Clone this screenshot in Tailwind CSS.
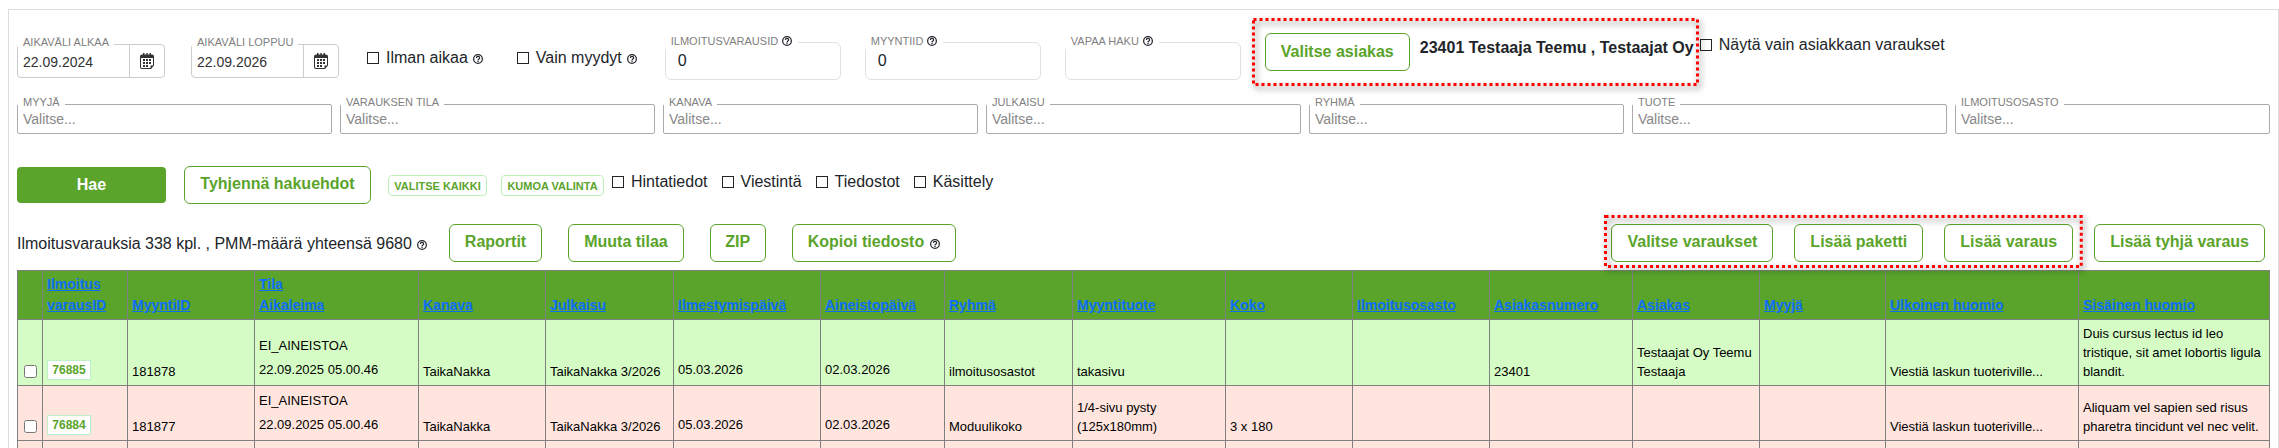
<!DOCTYPE html>
<html lang="fi">
<head>
<meta charset="utf-8">
<title>Ilmoitusvaraukset</title>
<script src="https://cdn.jsdelivr.net/npm/@tailwindcss/browser@4"></script>
</head>
<body class="h-screen bg-white pt-[9px] pl-2 font-['Liberation_Sans',Arial,sans-serif] text-base leading-6 text-[#212529] overflow-hidden">

<svg class="hidden" aria-hidden="true">
  <symbol id="help" viewBox="0 0 20 20">
    <circle cx="10" cy="10" r="8.7" fill="none" stroke="currentColor" stroke-width="2.5"/>
    <path d="M6.8 8.2C6.8 6 8.2 4.8 10.1 4.8S13.3 6 13.3 7.8C13.3 10 10.1 10 10.1 12.4" fill="none" stroke="currentColor" stroke-width="2.4"/>
    <rect x="8.8" y="13.4" width="2.5" height="2.5" fill="currentColor"/>
  </symbol>
  <symbol id="calendar" viewBox="0 0 14 16">
    <path fill="currentColor" fill-rule="evenodd" d="M2 1.5H3V0H4.5V1.5H6.3V0H7.7V1.5H9.5V0H11V1.5H12Q14 1.5 14 3.5V12.5L11 16H2Q0 16 0 14V3.5Q0 1.5 2 1.5ZM1 5V14Q1 15 2 15H10.5V12.5H13V5Z"/>
    <path fill="currentColor" d="M3 6h2v2H3zM6 6h2v2H6zM9 6h2v2H9zM3 9h2v2H3zM6 9h2v2H6zM9 9h2v2H9zM3 12h2v2H3zM6 12h2v2H6z"/>
  </symbol>
</svg>

<main class="h-full overflow-hidden border border-b-0 border-[#dddddd] px-2 pt-2">

  <form>
    <div class="flex items-start">
      <div class="relative mt-[26px] flex h-[34px] w-[148px] rounded border border-[#cccccc]">
        <label for="alkaa" class="absolute -top-[9px] left-0 bg-white px-[5px] text-[11px] leading-3 text-[#808080] whitespace-nowrap">AIKAVÄLI ALKAA</label>
        <input id="alkaa" value="22.09.2024" class="min-w-0 flex-1 pt-0.5 pl-[5px] text-sm text-[#333333]">
        <button type="button" aria-label="Avaa kalenteri" class="flex w-[35px] items-center justify-center border-l border-[#cccccc] text-[#333333]"><svg class="h-4 w-3.5"><use href="#calendar"/></svg></button>
      </div>
      <div class="relative mt-[26px] ml-[26px] flex h-[34px] w-[148px] rounded border border-[#cccccc]">
        <label for="loppuu" class="absolute -top-[9px] left-0 bg-white px-[5px] text-[11px] leading-3 text-[#808080] whitespace-nowrap">AIKAVÄLI LOPPUU</label>
        <input id="loppuu" value="22.09.2026" class="min-w-0 flex-1 pt-0.5 pl-[5px] text-sm text-[#333333]">
        <button type="button" aria-label="Avaa kalenteri" class="flex w-[35px] items-center justify-center border-l border-[#cccccc] text-[#333333]"><svg class="h-4 w-3.5"><use href="#calendar"/></svg></button>
      </div>

      <div class="mt-7 ml-7 flex items-center">
        <input id="ilman" type="checkbox" class="size-3 appearance-none border border-[#212529] checked:bg-[#212529]">
        <label for="ilman" class="ml-[7px]">Ilman aikaa</label>
        <svg class="mt-0.5 ml-[5px] size-2.5"><use href="#help"/></svg>
      </div>
      <div class="mt-7 ml-[34px] flex items-center">
        <input id="myydyt" type="checkbox" class="size-3 appearance-none border border-[#212529] checked:bg-[#212529]">
        <label for="myydyt" class="ml-[7px]">Vain myydyt</label>
        <svg class="mt-0.5 ml-[5px] size-2.5"><use href="#help"/></svg>
      </div>

      <div class="relative mt-6 ml-7 w-44">
        <label for="varausid" class="absolute -top-[9px] left-0 flex items-center bg-white px-1.5 text-[11px] leading-4 text-[#808080] whitespace-nowrap">ILMOITUSVARAUSID<svg class="ml-1 size-2.5 text-[#212529]"><use href="#help"/></svg></label>
        <input id="varausid" value="0" class="block h-[38px] w-full rounded-md border border-[#dee2e6] pl-3">
      </div>
      <div class="relative mt-6 ml-6 w-44">
        <label for="myyntiid" class="absolute -top-[9px] left-0 flex items-center bg-white px-1.5 text-[11px] leading-4 text-[#808080] whitespace-nowrap">MYYNTIID<svg class="ml-1 size-2.5 text-[#212529]"><use href="#help"/></svg></label>
        <input id="myyntiid" value="0" class="block h-[38px] w-full rounded-md border border-[#dee2e6] pl-3">
      </div>
      <div class="relative mt-6 ml-6 w-44">
        <label for="haku" class="absolute -top-[9px] left-0 flex items-center bg-white px-1.5 text-[11px] leading-4 text-[#808080] whitespace-nowrap">VAPAA HAKU<svg class="ml-1 size-2.5 text-[#212529]"><use href="#help"/></svg></label>
        <input id="haku" class="block h-[38px] w-full rounded-md border border-[#dee2e6] pl-3">
      </div>

      <div class="relative ml-[11px] flex h-[68px] w-[447px] items-start pl-[13px]">
        <button type="button" class="mt-[15px] h-[38px] w-[145px] rounded-md border border-[#5aa42b] font-bold text-[#5aa42b]">Valitse asiakas</button>
        <strong class="mt-[18px] ml-2.5 whitespace-nowrap">23401 Testaaja Teemu , Testaajat Oy</strong>
        <svg class="pointer-events-none absolute inset-0 size-full overflow-visible drop-shadow-[2px_3px_3px_rgba(0,0,0,0.6)]"><rect x="1.5" y="1.5" class="h-[calc(100%-3px)] w-[calc(100%-3px)]" fill="none" stroke="#ff0000" stroke-width="3" stroke-dasharray="3 3"/></svg>
      </div>

      <div class="mt-[15px] ml-px flex items-center">
        <input id="vain" type="checkbox" class="size-3 appearance-none border border-[#212529] checked:bg-[#212529]">
        <label for="vain" class="ml-[7px]">Näytä vain asiakkaan varaukset</label>
      </div>
    </div>

    <div class="mt-[18px] grid grid-cols-7 gap-2">
      <div class="relative">
        <label for="s1" class="absolute -top-2 left-px bg-white px-[5px] text-[11px] leading-3 text-[#808080]">MYYJÄ</label>
        <select id="s1" class="block h-[30px] w-full appearance-none rounded-xs border border-[#aaaaaa] pb-px pl-[5px] text-sm text-[#888888]"><option>Valitse...</option></select>
      </div>
      <div class="relative">
        <label for="s2" class="absolute -top-2 left-px bg-white px-[5px] text-[11px] leading-3 text-[#808080]">VARAUKSEN TILA</label>
        <select id="s2" class="block h-[30px] w-full appearance-none rounded-xs border border-[#aaaaaa] pb-px pl-[5px] text-sm text-[#888888]"><option>Valitse...</option></select>
      </div>
      <div class="relative">
        <label for="s3" class="absolute -top-2 left-px bg-white px-[5px] text-[11px] leading-3 text-[#808080]">KANAVA</label>
        <select id="s3" class="block h-[30px] w-full appearance-none rounded-xs border border-[#aaaaaa] pb-px pl-[5px] text-sm text-[#888888]"><option>Valitse...</option></select>
      </div>
      <div class="relative">
        <label for="s4" class="absolute -top-2 left-px bg-white px-[5px] text-[11px] leading-3 text-[#808080]">JULKAISU</label>
        <select id="s4" class="block h-[30px] w-full appearance-none rounded-xs border border-[#aaaaaa] pb-px pl-[5px] text-sm text-[#888888]"><option>Valitse...</option></select>
      </div>
      <div class="relative">
        <label for="s5" class="absolute -top-2 left-px bg-white px-[5px] text-[11px] leading-3 text-[#808080]">RYHMÄ</label>
        <select id="s5" class="block h-[30px] w-full appearance-none rounded-xs border border-[#aaaaaa] pb-px pl-[5px] text-sm text-[#888888]"><option>Valitse...</option></select>
      </div>
      <div class="relative">
        <label for="s6" class="absolute -top-2 left-px bg-white px-[5px] text-[11px] leading-3 text-[#808080]">TUOTE</label>
        <select id="s6" class="block h-[30px] w-full appearance-none rounded-xs border border-[#aaaaaa] pb-px pl-[5px] text-sm text-[#888888]"><option>Valitse...</option></select>
      </div>
      <div class="relative">
        <label for="s7" class="absolute -top-2 left-px bg-white px-[5px] text-[11px] leading-3 text-[#808080]">ILMOITUSOSASTO</label>
        <select id="s7" class="block h-[30px] w-full appearance-none rounded-xs border border-[#aaaaaa] pb-px pl-[5px] text-sm text-[#888888]"><option>Valitse...</option></select>
      </div>
    </div>

    <div class="mt-8 flex items-start">
      <button type="submit" class="mt-px h-9 w-[149px] rounded bg-[#5aa42b] font-bold text-white">Hae</button>
      <button type="reset" class="ml-[18px] h-[38px] w-[187px] rounded-md border border-[#5aa42b] pb-0.5 font-bold text-[#5aa42b]">Tyhjennä hakuehdot</button>
      <button type="button" class="mt-[9px] ml-[17px] h-[21px] w-[99px] rounded border border-[#bdf0b8] text-[11px] leading-4 font-bold whitespace-nowrap text-[#5aa42b]">VALITSE KAIKKI</button>
      <button type="button" class="mt-[9px] ml-3.5 h-[21px] w-[103px] rounded border border-[#bdf0b8] text-[11px] leading-4 font-bold whitespace-nowrap text-[#5aa42b]">KUMOA VALINTA</button>
      <div class="mt-1 ml-2 flex gap-3.5">
        <div class="flex items-center gap-[7px]"><input id="c1" type="checkbox" class="size-3 appearance-none border border-[#212529] checked:bg-[#212529]"><label for="c1">Hintatiedot</label></div>
        <div class="flex items-center gap-[7px]"><input id="c2" type="checkbox" class="size-3 appearance-none border border-[#212529] checked:bg-[#212529]"><label for="c2">Viestintä</label></div>
        <div class="flex items-center gap-[7px]"><input id="c3" type="checkbox" class="size-3 appearance-none border border-[#212529] checked:bg-[#212529]"><label for="c3">Tiedostot</label></div>
        <div class="flex items-center gap-[7px]"><input id="c4" type="checkbox" class="size-3 appearance-none border border-[#212529] checked:bg-[#212529]"><label for="c4">Käsittely</label></div>
      </div>
    </div>
  </form>

  <div class="mt-5 flex items-start pr-[5px]">
    <p class="mt-2 flex items-center whitespace-nowrap">Ilmoitusvarauksia 338 kpl. , PMM-määrä yhteensä 9680<svg class="mt-0.5 ml-[5px] size-2.5"><use href="#help"/></svg></p>
    <div class="ml-[22px] flex gap-[26px]">
      <button type="button" class="h-[38px] rounded-md border border-[#5aa42b] px-[15px] pb-0.5 font-bold text-[#5aa42b]">Raportit</button>
      <button type="button" class="h-[38px] rounded-md border border-[#5aa42b] px-[15px] pb-0.5 font-bold text-[#5aa42b]">Muuta tilaa</button>
      <button type="button" class="h-[38px] w-14 rounded-md border border-[#5aa42b] pb-0.5 font-bold text-[#5aa42b]">ZIP</button>
      <button type="button" class="flex h-[38px] items-center rounded-md border border-[#5aa42b] px-[15px] pb-0.5 font-bold text-[#5aa42b]">Kopioi tiedosto<svg class="mt-1 ml-1.5 size-2.5 text-[#212529]"><use href="#help"/></svg></button>
    </div>
    <div class="relative ml-auto flex gap-[21px]">
      <button type="button" class="h-[38px] rounded-md border border-[#5aa42b] px-[15px] pb-0.5 font-bold text-[#5aa42b]">Valitse varaukset</button>
      <button type="button" class="h-[38px] rounded-md border border-[#5aa42b] px-[15px] pb-0.5 font-bold text-[#5aa42b]">Lisää paketti</button>
      <button type="button" class="h-[38px] rounded-md border border-[#5aa42b] px-[15px] pb-0.5 font-bold text-[#5aa42b]">Lisää varaus</button>
      <div class="pointer-events-none absolute -top-[9px] -right-2.5 -bottom-1.5 -left-[7px]">
        <svg class="size-full overflow-visible drop-shadow-[2px_3px_3px_rgba(0,0,0,0.6)]"><rect x="1.5" y="1.5" class="h-[calc(100%-3px)] w-[calc(100%-3px)]" fill="none" stroke="#ff0000" stroke-width="3" stroke-dasharray="3 3"/></svg>
      </div>
    </div>
    <button type="button" class="ml-[21px] h-[38px] rounded-md border border-[#5aa42b] px-[15px] pb-0.5 font-bold text-[#5aa42b]">Lisää tyhjä varaus</button>
  </div>

  <table class="mt-2 w-full table-fixed border-collapse text-left text-[13px] leading-[19px] text-black [&_td]:border [&_td]:border-[#808080] [&_td]:px-1 [&_td]:pb-1 [&_td]:align-bottom [&_th]:border [&_th]:border-[#808080] [&_th]:px-1 [&_th]:pb-[3px] [&_th]:align-bottom">
    <colgroup>
      <col class="w-[25px]"><col class="w-[85px]"><col class="w-[127px]"><col class="w-[164px]"><col class="w-[127px]"><col class="w-[128px]"><col class="w-[147px]"><col class="w-[124px]"><col class="w-[128px]"><col class="w-[153px]"><col class="w-[127px]"><col class="w-[137px]"><col class="w-[143px]"><col class="w-[127px]"><col class="w-[126px]"><col class="w-[193px]"><col class="w-[191px]">
    </colgroup>
    <thead class="bg-[#5aa42b] text-sm leading-[21px] text-[#0d6efd] [&_a]:underline">
      <tr class="h-[49px]">
        <th></th>
        <th><a href="#">Ilmoitus<br>varausID</a></th>
        <th><a href="#">MyyntiID</a></th>
        <th><a href="#">Tila</a><br><a href="#">Aikaleima</a></th>
        <th><a href="#">Kanava</a></th>
        <th><a href="#">Julkaisu</a></th>
        <th><a href="#">Ilmestymispäivä</a></th>
        <th><a href="#">Aineistopäivä</a></th>
        <th><a href="#">Ryhmä</a></th>
        <th><a href="#">Myyntituote</a></th>
        <th><a href="#">Koko</a></th>
        <th><a href="#">Ilmoitusosasto</a></th>
        <th><a href="#">Asiakasnumero</a></th>
        <th><a href="#">Asiakas</a></th>
        <th><a href="#">Myyjä</a></th>
        <th><a href="#">Ulkoinen huomio</a></th>
        <th><a href="#">Sisäinen huomio</a></th>
      </tr>
    </thead>
    <tbody>
      <tr class="h-[66px] bg-[#d5fcc5]">
        <td><input type="checkbox" aria-label="Valitse 76885" class="mx-auto mb-[3px] block size-[13px]"></td>
        <td><button type="button" class="mb-px block h-5 w-11 border border-[#bdf0c8] bg-white text-xs font-bold text-[#5aa42b]">76885</button></td>
        <td>181878</td>
        <td class="pb-[3px]! leading-6">EI_AINEISTOA<br>22.09.2025 05.00.46</td>
        <td>TaikaNakka</td>
        <td>TaikaNakka 3/2026</td>
        <td class="pb-[3px]! leading-6">05.03.2026</td>
        <td class="pb-[3px]! leading-6">02.03.2026</td>
        <td>ilmoitusosastot</td>
        <td>takasivu</td>
        <td></td>
        <td></td>
        <td>23401</td>
        <td>Testaajat Oy Teemu Testaaja</td>
        <td></td>
        <td>Viestiä laskun tuoteriville...</td>
        <td>Duis cursus lectus id leo tristique, sit amet lobortis ligula blandit.</td>
      </tr>
      <tr class="h-[55px] bg-[#ffe5de]">
        <td><input type="checkbox" aria-label="Valitse 76884" class="mx-auto mb-[3px] block size-[13px]"></td>
        <td><button type="button" class="mb-px block h-5 w-11 border border-[#bdf0c8] bg-white text-xs font-bold text-[#5aa42b]">76884</button></td>
        <td>181877</td>
        <td class="pb-[3px]! leading-6">EI_AINEISTOA<br>22.09.2025 05.00.46</td>
        <td>TaikaNakka</td>
        <td>TaikaNakka 3/2026</td>
        <td class="pb-[3px]! leading-6">05.03.2026</td>
        <td class="pb-[3px]! leading-6">02.03.2026</td>
        <td>Moduulikoko</td>
        <td>1/4-sivu pysty (125x180mm)</td>
        <td>3 x 180</td>
        <td></td>
        <td></td>
        <td></td>
        <td></td>
        <td>Viestiä laskun tuoteriville...</td>
        <td>Aliquam vel sapien sed risus pharetra tincidunt vel nec velit.</td>
      </tr>
      <tr class="h-3 bg-[#ffe5de]">
        <td></td><td></td><td></td><td></td><td></td><td></td><td></td><td></td><td></td><td></td><td></td><td></td><td></td><td></td><td></td><td></td><td></td>
      </tr>
    </tbody>
  </table>
</main>
</body>
</html>
